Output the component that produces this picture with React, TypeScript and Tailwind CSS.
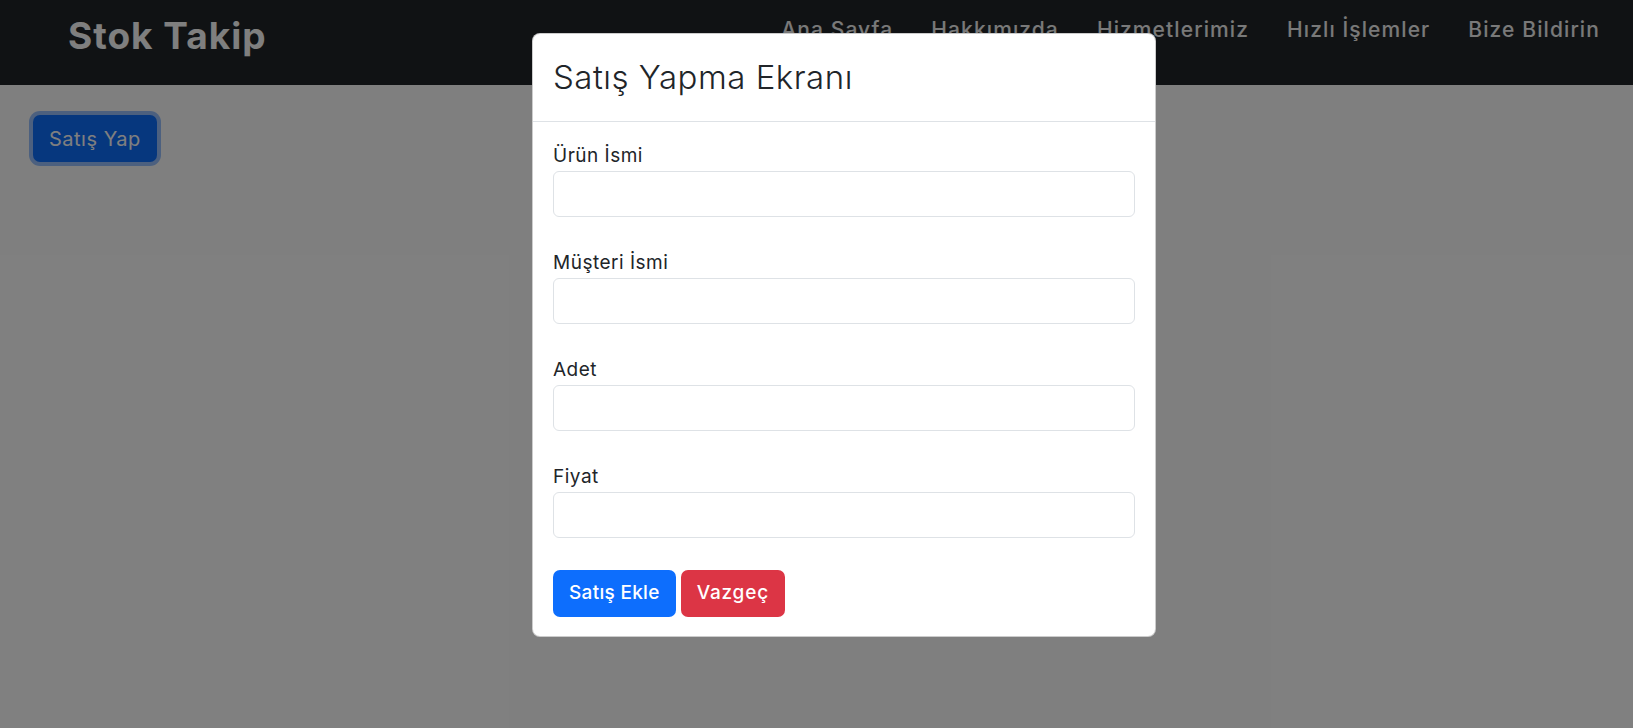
import React from "react";

const fields = ["Ürün İsmi", "Müşteri İsmi", "Adet", "Fiyat"];
const links = ["Ana Sayfa", "Hakkımızda", "Hizmetlerimiz", "Hızlı İşlemler", "Bize Bildirin"];

export default function App() {
  return (
    <div className="relative h-[728px] overflow-hidden bg-white font-['Inter','Noto_Sans',sans-serif]">
      <nav className="flex h-[85px] items-start justify-between bg-[#212529] pl-[68px] pr-[33px]">
        <a className="mt-[9px] text-[37px] font-bold leading-[54px] tracking-[1px] text-white">Stok Takip</a>
        <ul className="mt-[14px] flex gap-[38px] text-[21px] font-medium leading-[32px] tracking-[1.1px] text-[#f2f2f2]">
          {links.map((l) => (
            <li key={l}>{l}</li>
          ))}
        </ul>
      </nav>
      <main className="px-[33px] pt-[30px]">
        <button className="h-[47px] rounded-[7px] bg-[#0d6efd] px-4 text-[20px] leading-none tracking-[0.5px] text-white shadow-[0_0_0_4px_rgba(49,132,253,0.5)]">
          Satış Yap
        </button>
      </main>

      <div className="absolute inset-0 bg-black/50" />

      <div className="absolute left-[532px] top-[33px] w-[624px] rounded-[8px] border border-black/20 bg-white">
        <div className="flex h-[88px] items-center border-b border-[#dee2e6] px-5">
          <h5 className="text-[33px] font-light leading-[1.2] tracking-[0.5px] text-[#212529]">Satış Yapma Ekranı</h5>
        </div>
        <div className="px-5 pb-[19px] pt-5">
          {fields.map((f) => (
            <div key={f} className="mb-[32px]">
              <label className="mb-[2px] block text-[19px] leading-[27px] tracking-[0.5px] text-[#212529]">{f}</label>
              <input
                type="text"
                className="block h-[46px] w-full rounded-[6px] border border-[#dee2e6] bg-white px-3 outline-none"
              />
            </div>
          ))}
          <div className="flex gap-[5px]">
            <button className="h-[47px] rounded-[7px] bg-[#0d6efd] px-4 text-[19px] font-medium tracking-[0.3px] text-white">
              Satış Ekle
            </button>
            <button className="h-[47px] rounded-[7px] bg-[#dc3545] px-4 text-[19px] font-medium tracking-[0.8px] text-white">
              Vazgeç
            </button>
          </div>
        </div>
      </div>
    </div>
  );
}
